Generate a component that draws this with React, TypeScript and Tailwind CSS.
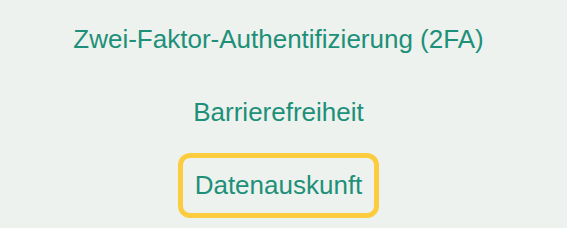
const links = [
  { label: "Zwei-Faktor-Authentifizierung (2FA)", focused: false },
  { label: "Barrierefreiheit", focused: false },
  { label: "Datenauskunft", focused: true },
];

export default function App() {
  return (
    <div className="min-h-[228px] w-full bg-[#eef2ee] pt-[7px] pr-[10px] font-['Liberation_Sans',Arial,sans-serif]">
      <ul className="flex flex-col items-center gap-2">
        {links.map((link) => (
          <li key={link.label}>
            <a
              href="#"
              className={
                link.focused
                  ? "block rounded-xl border-[5px] border-[#fbcd3e] px-3 py-2 text-[26px] leading-[39px] text-[#1d9079]"
                  : "block rounded-xl border-[5px] border-transparent px-3 py-2 text-[26px] leading-[39px] text-[#1d9079]"
              }
            >
              {link.label}
            </a>
          </li>
        ))}
      </ul>
    </div>
  );
}
